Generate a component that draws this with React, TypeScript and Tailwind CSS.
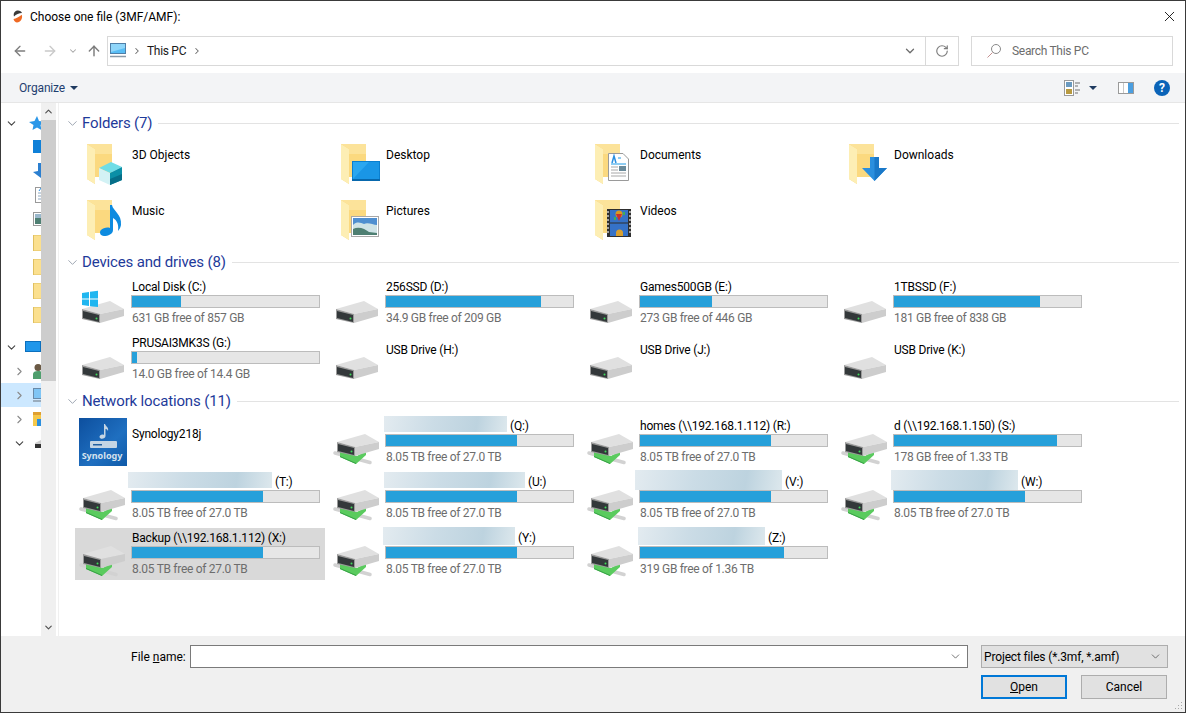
import { ArrowLeft, ArrowRight, ArrowUp, ChevronDown, ChevronRight, ChevronUp, RotateCw, X } from 'lucide-react';

const UI = "font-['Roboto','Noto_Sans',sans-serif]";

function Folder() {
  return (
    <>
      <path d="M12 6 H37 V39 H20 V46 L12 41 Z" fill="#fbd97f" />
      <path d="M12 6 L20 11 V46 L12 41 Z" fill="#fdeeb4" />
      <path d="M20 11 L12 6 H37 V16 H20 Z" fill="#fce39a" />
    </>
  );
}

function Overlay({ kind }: { kind: string }) {
  if (kind === 'cube')
    return (
      <>
        <path d="M24 30 L36 24 L47 29 L35 35 Z" fill="#6fdde6" />
        <path d="M24 30 L35 35 V47 L24 42 Z" fill="#d3f2f5" />
        <path d="M35 35 L47 29 V42 L35 47 Z" fill="#0b8fa6" />
        <path d="M35 41 L47 36 V42 L35 47 Z" fill="#066e88" />
      </>
    );
  if (kind === 'desktop')
    return (
      <>
        <rect x="23" y="23" width="28" height="20" fill="#0a7fd0" />
        <path d="M24 24 H50 V41 H24 Z" fill="#2ba7f0" />
        <path d="M24 41 L40 24 H50 V41 Z" fill="#1a96e6" />
        <rect x="23" y="41" width="28" height="2" fill="#0868ad" />
      </>
    );
  if (kind === 'doc')
    return (
      <>
        <path d="M25.5 15.5 H40 L45.5 21 V42.5 H25.5 Z" fill="#fff" stroke="#9a9a9a" />
        <path d="M29 25 L31 18 L33 25" fill="none" stroke="#2a8fe0" strokeWidth="1.5" />
        <path d="M35 20 H38 M28 26 H43" stroke="#1e9be6" strokeWidth="1" />
        <path d="M28 29 H35 M28 32 H35 M28 35 H43 M28 38 H43" stroke="#a8a8a8" strokeWidth="1" />
        <rect x="36" y="28" width="7" height="5" fill="#6a8a9a" />
      </>
    );
  if (kind === 'download')
    return (
      <>
        <path d="M33 19 H42 V30 H50 L37.5 43 L25 30 H33 Z" fill="#2b8fde" />
        <path d="M37.5 19 H42 V30 H50 L37.5 43 Z" fill="#1a78c8" />
      </>
    );
  if (kind === 'music')
    return <path d="M35 11 L37 11 C38 17 47 20 46 31 C45.5 34 44 36 43 37 C44 31 42 26 38 24 V36 C38 40 33 42 29 42 C25 42 24 38 26 36 C28 34 32 33 35 34 Z" fill="#0d8be0" />;
  if (kind === 'picture')
    return (
      <>
        <rect x="22.5" y="22.5" width="27" height="20" fill="#fff" stroke="#a8a8a8" />
        <rect x="24" y="24" width="24" height="17" fill="#4f8fd0" />
        <path d="M24 31 C28 27 32 29 35 30 C39 28 44 31 48 31 V41 H24 Z" fill="#cfe3e6" />
        <path d="M24 35 C30 32 36 35 40 38 L48 39 V41 H24 Z" fill="#4e7f72" />
      </>
    );
  return (
    <>
      <rect x="24" y="15" width="24" height="28" fill="#2e2e2e" />
      <rect x="27" y="16" width="18" height="12.5" fill="#3572c8" />
      <rect x="27" y="29.5" width="18" height="12.5" fill="#3572c8" />
      <circle cx="36" cy="20" r="3.5" fill="#d89a20" />
      <path d="M33 20 L36 27 L39 20 Z" fill="#c83030" />
      <path d="M31 23 H33 V26 H31 Z M40 18 H42 V21 H40 Z" fill="#3fae5a" />
      <path d="M33 39 A3.5 3.5 0 0 1 40 39 V42 H33 Z" fill="#d8a030" />
      <path d="M24 18 H26 M24 22 H26 M24 26 H26 M24 30 H26 M24 34 H26 M24 38 H26 M46 18 H48 M46 22 H48 M46 26 H48 M46 30 H48 M46 34 H48 M46 38 H48" stroke="#c8c8c8" strokeWidth="1.5" />
    </>
  );
}

function FolderIcon({ kind }: { kind: string }) {
  return (
    <svg width="56" height="52" viewBox="0 0 56 52" className="shrink-0">
      <Folder />
      <Overlay kind={kind} />
    </svg>
  );
}

function DriveShape({ dx, dy }: { dx: number; dy: number }) {
  return (
    <g transform={`translate(${dx} ${dy})`}>
      <path d="M0 8 L28 0 L42 8 L18 13 Z" fill="#e0e0e0" />
      <path d="M18 13 L42 8 V15 L18 22 Z" fill="#cdcdcd" />
      <path d="M0 8 L18 13 V22 L0 18 Z" fill="#9a9a9a" />
      <path d="M1 10 L17 14 V21 L1 17 Z" fill="#33383a" />
      <circle cx="14.5" cy="17.5" r="1" fill="#3ddc5a" />
    </g>
  );
}

function DriveIcon({ kind }: { kind: string }) {
  return (
    <svg width="56" height="52" viewBox="0 0 56 52" className="shrink-0">
      {kind === 'net' ? (
        <>
          <path d="M6 37 L41 46.5" fill="none" stroke="#d2d2d2" strokeWidth="3.5" strokeLinecap="round" />
          <path d="M11 33 L28 40 L37 35 V39 L27 48 L11 41 Z" fill="#5acb5e" />
          <path d="M11 40 L27 47 L27 48 L11 41 Z" fill="#35a045" />
          <DriveShape dx={8} dy={18} />
        </>
      ) : (
        <DriveShape dx={7} dy={24} />
      )}
      {kind === 'win' && (
        <g fill="#1fb6f0">
          <path d="M7 16 L14 15 V21.5 H7 Z" />
          <path d="M15 14.8 L23 13.8 V21.5 H15 Z" />
          <path d="M7 22.5 H14 V29 L7 28 Z" />
          <path d="M15 22.5 H23 V30 L15 29.2 Z" />
        </g>
      )}
    </svg>
  );
}

function SynologyIcon() {
  return (
    <svg width="56" height="52" viewBox="0 0 56 52" className="shrink-0">
      <defs>
        <linearGradient id="syn" x1="0" y1="0" x2="1" y2="1">
          <stop offset="0" stopColor="#0d4f9e" />
          <stop offset="0.6" stopColor="#1f6fc0" />
          <stop offset="1" stopColor="#0f5aa8" />
        </linearGradient>
      </defs>
      <rect x="4" y="2" width="48" height="48" fill="url(#syn)" />
      <path d="M29 8 L30 8 C31 11 34 11 33 15 C32 13 31 13 30.5 13 V20 C30.5 23 25 24 24.5 21 C24.5 19 27 18 29 19 Z" fill="#c5d5e4" />
      <rect x="15" y="25" width="27" height="7" rx="1" fill="#c5d5e4" />
      <rect x="18" y="28" width="9" height="1.5" fill="#24609f" />
      <text x="27" y="43" textAnchor="middle" fontSize="9" fontWeight="700" fill="#d5e2ee" fontFamily="Noto Sans, sans-serif">Synology</text>
    </svg>
  );
}

function Bar({ fill }: { fill: number }) {
  return (
    <div className="h-[13px] w-[189px] border border-[#bcbcbc] bg-[#e6e6e6]">
      <div className="h-full bg-[#26a0da]" style={{ width: fill }} />
    </div>
  );
}

type Drive = {
  name: string;
  icon: string;
  fill?: number;
  free?: string;
  blur?: [number, number, number]; // width, height, left shift of the smudged part of the name
  selected?: boolean;
};

function DriveTile({ d }: { d: Drive }) {
  return (
    <div className={`flex h-[52px] ${d.selected ? 'bg-[#d9d9d9]' : ''}`}>
      <div className="w-[56px] shrink-0">
        {d.icon === 'syn' ? <SynologyIcon /> : <DriveIcon kind={d.icon} />}
      </div>
      <div className={`min-w-0 ${d.fill ? '' : d.icon === 'syn' ? 'pt-[8px]' : 'pt-[7px]'}`}>
        <div className="flex h-[18px] items-center text-xs leading-[18px] tracking-[-0.2px] whitespace-nowrap text-black">
          {d.blur && (
            <div
              className="mr-[2px] mb-[2px] shrink-0 bg-[linear-gradient(100deg,#e3ebf0_0%,#cbdce6_40%,#bdd3df_75%,#dde8ed_100%)]"
              style={{ width: d.blur[0], height: d.blur[1], marginLeft: d.blur[2] }}
            />
          )}
          <span className="pt-[2px] pl-px">{d.name}</span>
        </div>
        {d.fill && <Bar fill={d.fill} />}
        {d.free && <div className="h-[18px] pl-px text-xs leading-[20px] tracking-[-0.3px] whitespace-nowrap text-[#6d6d6d]">{d.free}</div>}
      </div>
    </div>
  );
}

function SectionHead({ title }: { title: string }) {
  return (
    <div className="flex h-5 items-center pt-[2px] pl-[6px]">
      <ChevronDown size={15} strokeWidth={1.2} className="shrink-0 text-[#7f8a99]" />
      <span className="ml-[2px] text-[15px] leading-5 tracking-[-0.15px] whitespace-nowrap text-[#1e3a9a]">{title}</span>
      <div className="ml-[6px] h-px flex-1 bg-[#e3e3e3]" />
    </div>
  );
}

const FOLDERS = [
  ['3D Objects', 'cube'],
  ['Desktop', 'desktop'],
  ['Documents', 'doc'],
  ['Downloads', 'download'],
  ['Music', 'music'],
  ['Pictures', 'picture'],
  ['Videos', 'film'],
];

const DRIVES: Drive[] = [
  { name: 'Local Disk (C:)', icon: 'win', fill: 49, free: '631 GB free of 857 GB' },
  { name: '256SSD (D:)', icon: 'hdd', fill: 155, free: '34.9 GB free of 209 GB' },
  { name: 'Games500GB (E:)', icon: 'hdd', fill: 72, free: '273 GB free of 446 GB' },
  { name: '1TBSSD (F:)', icon: 'hdd', fill: 146, free: '181 GB free of 838 GB' },
  { name: 'PRUSAI3MK3S (G:)', icon: 'hdd', fill: 5, free: '14.0 GB free of 14.4 GB' },
  { name: 'USB Drive (H:)', icon: 'hdd' },
  { name: 'USB Drive (J:)', icon: 'hdd' },
  { name: 'USB Drive (K:)', icon: 'hdd' },
];

const NETWORK: Drive[] = [
  { name: 'Synology218j', icon: 'syn' },
  { name: '(Q:)', icon: 'net', fill: 131, free: '8.05 TB free of 27.0 TB', blur: [123, 16, -1] },
  { name: 'homes (\\\\192.168.1.112) (R:)', icon: 'net', fill: 131, free: '8.05 TB free of 27.0 TB' },
  { name: 'd (\\\\192.168.1.150) (S:)', icon: 'net', fill: 163, free: '178 GB free of 1.33 TB' },
  { name: '(T:)', icon: 'net', fill: 131, free: '8.05 TB free of 27.0 TB', blur: [144, 16, -3] },
  { name: '(U:)', icon: 'net', fill: 131, free: '8.05 TB free of 27.0 TB', blur: [141, 16, -1] },
  { name: '(V:)', icon: 'net', fill: 131, free: '8.05 TB free of 27.0 TB', blur: [147, 20, -4] },
  { name: '(W:)', icon: 'net', fill: 131, free: '8.05 TB free of 27.0 TB', blur: [127, 20, -2] },
  { name: 'Backup (\\\\192.168.1.112) (X:)', icon: 'net', fill: 131, free: '8.05 TB free of 27.0 TB', selected: true },
  { name: '(Y:)', icon: 'net', fill: 131, free: '8.05 TB free of 27.0 TB', blur: [132, 18, -2] },
  { name: '(Z:)', icon: 'net', fill: 144, free: '319 GB free of 1.36 TB', blur: [127, 18, -1] },
];

function NavIcon({ kind }: { kind: string }) {
  if (kind === 'star')
    return (
      <svg width="16" height="16" viewBox="0 0 16 16" className="-ml-[5px] shrink-0">
        <path d="M9 1 L11 6 L16 6.5 L12.5 10 L13.5 15 L9 12.5 L4.5 15 L5.5 10 L1 7 L6.5 6 Z" fill="#2b97e8" />
      </svg>
    );
  if (kind === 'desktop')
    return (
      <svg width="16" height="16" viewBox="0 0 16 16" className="shrink-0">
        <rect y="1" width="16" height="13" fill="#0f80d8" />
      </svg>
    );
  if (kind === 'monitor')
    return (
      <svg width="16" height="14" viewBox="0 0 16 14" className="-ml-[8px] shrink-0">
        <rect x="0.5" y="1.5" width="15" height="10" fill="#1f96ea" stroke="#0b6fbd" />
      </svg>
    );
  if (kind === 'down')
    return (
      <svg width="16" height="16" viewBox="0 0 16 16" className="shrink-0">
        <path d="M5 0 H9 V8 H14 L8 15 L0 9 L5 8 Z" fill="#2b7fd0" />
      </svg>
    );
  if (kind === 'doc')
    return (
      <svg width="16" height="16" viewBox="0 0 16 16" className="shrink-0">
        <rect x="2.5" y="0.5" width="13" height="15" fill="#fff" stroke="#999" />
        <path d="M5 6 H16 M5 9 H16 M5 12 H16" stroke="#8fa8c0" />
        <path d="M6 4 L8 1" stroke="#2a8fe0" />
      </svg>
    );
  if (kind === 'pic')
    return (
      <svg width="16" height="16" viewBox="0 0 16 16" className="shrink-0">
        <rect x="0.5" y="1.5" width="15" height="13" fill="#fff" stroke="#999" />
        <rect x="2" y="3" width="14" height="10" fill="#4e7f72" />
        <rect x="2" y="3" width="14" height="4" fill="#9ab8cc" />
      </svg>
    );
  if (kind === 'folder')
    return (
      <svg width="16" height="16" viewBox="0 0 16 16" className="shrink-0">
        <rect x="0.5" y="0" width="15" height="16" fill="#fbe08f" stroke="#e0c060" />
      </svg>
    );
  if (kind === 'user')
    return (
      <svg width="16" height="16" viewBox="0 0 16 16" className="-ml-[2px] shrink-0">
        <circle cx="7" cy="4.5" r="3.5" fill="#6b5a45" />
        <path d="M2 16 V11 C2 9 4 8 7 8 C10 8 12 9 12 11 V16 Z" fill="#4f9e6d" />
      </svg>
    );
  if (kind === 'pc')
    return (
      <svg width="16" height="16" viewBox="0 0 16 16" className="shrink-0">
        <rect x="0.5" y="1.5" width="15" height="10" fill="#7fc5f5" stroke="#6a8aa8" />
        <path d="M0 14 H16" stroke="#8a9aa8" strokeWidth="1.5" />
      </svg>
    );
  if (kind === 'lib')
    return (
      <svg width="16" height="16" viewBox="0 0 16 16" className="shrink-0">
        <rect y="1" width="16" height="14" fill="#f5c84a" />
        <rect y="1" width="16" height="3" fill="#e0a030" />
        <rect x="4" y="8" width="12" height="7" fill="#2b8fde" />
      </svg>
    );
  return (
    <svg width="16" height="16" viewBox="0 0 16 16" className="shrink-0">
      <path d="M2 8 L8 5 L16 5 V9 H2 Z" fill="#d0d0d0" />
      <rect x="2" y="9" width="14" height="4" fill="#333" />
    </svg>
  );
}

type NavRow = { icon: string; chev?: 'open' | 'closed'; indent?: boolean; selected?: boolean };

const NAV_TOP: NavRow[] = [
  { icon: 'star', chev: 'open' },
  { icon: 'desktop' },
  { icon: 'down' },
  { icon: 'doc' },
  { icon: 'pic' },
  { icon: 'folder' },
  { icon: 'folder' },
  { icon: 'folder' },
  { icon: 'folder' },
];

const NAV_BOTTOM: NavRow[] = [
  { icon: 'monitor', chev: 'open' },
  { icon: 'user', chev: 'closed', indent: true },
  { icon: 'pc', chev: 'closed', indent: true, selected: true },
  { icon: 'lib', chev: 'closed', indent: true },
  { icon: 'drive', chev: 'open', indent: true },
];

function NavItem({ r }: { r: NavRow }) {
  return (
    <div className={`flex h-6 items-center overflow-hidden ${r.selected ? 'bg-[#cce8ff]' : ''}`}>
      <div className={`flex w-[32px] shrink-0 ${r.indent ? 'pl-[12px]' : 'pl-[4px]'}`}>
        {r.chev === 'open' && <ChevronDown size={13} strokeWidth={2} className="text-[#444]" />}
        {r.chev === 'closed' && <ChevronRight size={13} strokeWidth={2} className="text-[#8a8a8a]" />}
      </div>
      <NavIcon kind={r.icon} />
    </div>
  );
}

export default function App() {
  return (
    <div className={`${UI} flex h-[713px] w-[1186px] flex-col overflow-hidden border-t border-r border-b border-l border-[#3a3a3a] bg-white text-xs`}>
      {/* title bar */}
      <div className="flex h-[31px] shrink-0 items-center">
        <svg width="11" height="13" viewBox="0 0 11 13" className="ml-[11px]">
          <path d="M2 6.5 C1 3 3 0.5 6 0.5 C8 0.5 9.5 1.5 10 3 C7 3 4 4.5 2 6.5 Z" fill="#3a3a3a" />
          <path d="M1.5 9 C4 8.5 7 7 9.8 4.8 C11 8.5 8.5 12.5 5 12.5 C3.5 12.5 2 11 1.5 9 Z" fill="#ef6a24" />
        </svg>
        <span className="ml-[7px] text-xs text-black">Choose one file (3MF/AMF):</span>
        <X size={17} strokeWidth={1.2} className="mr-[7px] ml-auto text-black" />
      </div>

      {/* address row */}
      <div className="flex h-[41px] shrink-0 items-start pt-[4px]">
        <div className="flex h-[30px] w-[106px] shrink-0 items-center">
          <ArrowLeft size={16} strokeWidth={2} className="ml-[11px] text-[#7d7d7d]" />
          <ArrowRight size={16} strokeWidth={2} className="ml-[14px] text-[#c9c9c9]" />
          <ChevronDown size={10} strokeWidth={2.5} className="ml-[10px] text-[#a5a5a5]" />
          <ArrowUp size={16} strokeWidth={2.2} className="ml-[8px] text-[#7d7d7d]" />
        </div>
        <div className="flex h-[30px] w-[852px] shrink-0 items-center border border-[#d9d9d9]">
          <svg width="17" height="16" viewBox="0 0 17 16" className="ml-[2px] shrink-0">
            <rect x="0.5" y="0.5" width="15" height="10" fill="#58bdf5" stroke="#4f7fa8" />
            <path d="M1 1 H15 V5 L1 9 Z" fill="#8fd6fa" />
            <path d="M0 13.5 H16" stroke="#8a9aa8" strokeWidth="1.5" />
          </svg>
          <ChevronRight size={10} strokeWidth={2.5} className="ml-[5px] text-[#6a6a6a]" />
          <span className="ml-[5px] text-xs tracking-[-0.3px] text-[#1a1a1a]">This PC</span>
          <ChevronRight size={10} strokeWidth={2.5} className="ml-[6px] text-[#6a6a6a]" />
          <ChevronDown size={14} strokeWidth={2.2} className="mr-[8px] ml-auto text-[#6d6d6d]" />
          <div className="flex h-full w-[33px] shrink-0 items-center justify-center border-l border-[#d9d9d9]">
            <RotateCw size={14} strokeWidth={2} className="text-[#7d7d7d]" />
          </div>
        </div>
        <div className="ml-[12px] flex h-[30px] w-[202px] shrink-0 items-center border border-[#d9d9d9]">
          <svg width="16" height="16" viewBox="0 0 16 16" className="ml-[14px] shrink-0">
            <circle cx="10" cy="6" r="4.5" fill="none" stroke="#8a8a8a" />
            <path d="M6.5 9.5 L1.5 14.5" stroke="#c49090" />
          </svg>
          <span className="ml-[10px] text-xs tracking-[-0.3px] text-[#6d6d6d]">Search This PC</span>
        </div>
      </div>

      {/* toolbar */}
      <div className="flex h-[30px] shrink-0 items-center border-b border-[#e6e6e6] bg-[#f3f4f6]">
        <span className="ml-[18px] text-xs tracking-[-0.15px] text-[#1f3f70]">Organize</span>
        <svg width="8" height="4" viewBox="0 0 8 4" className="ml-[5px]"><path d="M0 0 H8 L4 4 Z" fill="#1f3a60" /></svg>
        <svg width="16" height="16" viewBox="0 0 16 16" className="ml-auto">
          <rect x="0.5" y="0.5" width="9" height="15" fill="#fff" stroke="#9a9a9a" />
          <rect x="2" y="2" width="6" height="5" fill="#6a9ac0" />
          <rect x="2" y="9" width="6" height="5" fill="#b89a40" />
          <path d="M11 3 H16 M11 6 H14 M11 10 H16 M11 13 H14" stroke="#707070" />
        </svg>
        <svg width="8" height="4" viewBox="0 0 8 4" className="ml-[9px]"><path d="M0 0 H8 L4 4 Z" fill="#1f3a60" /></svg>
        <svg width="16" height="12" viewBox="0 0 16 12" className="ml-[21px]">
          <rect x="0.5" y="0.5" width="15" height="11" fill="#fff" stroke="#9a9a9a" />
          <rect x="10" y="1" width="5" height="10" fill="#4a9ee0" />
          <path d="M5.5 1 V11" stroke="#c8c8c8" />
        </svg>
        <div className="mr-[15px] ml-[20px] flex h-4 w-4 items-center justify-center rounded-full bg-[#0a63b8] text-[12px] leading-none font-bold text-white">?</div>
      </div>

      {/* body */}
      <div className="flex min-h-0 flex-1">
        <div className="w-[40px] shrink-0 overflow-hidden pt-[8px]">
          {NAV_TOP.map((r, i) => (
            <NavItem key={i} r={r} />
          ))}
          <div className="h-2" />
          {NAV_BOTTOM.map((r, i) => (
            <NavItem key={i} r={r} />
          ))}
        </div>
        <div className="flex w-[15px] shrink-0 flex-col bg-[#f0f0f0]">
          <div className="flex h-[17px] items-center justify-center">
            <ChevronUp size={11} strokeWidth={2.5} className="text-[#505050]" />
          </div>
          <div className="h-[261px] bg-[#cdcdcd]" />
          <div className="flex-1" />
          <div className="flex h-[17px] items-center justify-center">
            <ChevronDown size={11} strokeWidth={2.5} className="text-[#505050]" />
          </div>
        </div>
        <div className="w-[3px] shrink-0 border-l-2 border-[#ffffff] bg-[#f0f0f0]" />
        <div className="min-w-0 flex-1 pt-[9px] pr-[6px]">
          <SectionHead title="Folders (7)" />
          <div className="mt-[6px] grid grid-cols-[repeat(4,250px)] gap-1 pl-[16px]">
            {FOLDERS.map(([name, kind]) => (
              <div key={name} className="flex h-[52px]">
                <FolderIcon kind={kind} />
                <div className="pt-[8px] pl-px text-xs leading-[18px] text-black">{name}</div>
              </div>
            ))}
          </div>
          <div className="mt-[5px]">
            <SectionHead title="Devices and drives (8)" />
          </div>
          <div className="mt-[6px] grid grid-cols-[repeat(4,250px)] gap-1 pl-[16px]">
            {DRIVES.map((d) => (
              <DriveTile key={d.name} d={d} />
            ))}
          </div>
          <div className="mt-[5px]">
            <SectionHead title="Network locations (11)" />
          </div>
          <div className="mt-[6px] grid grid-cols-[repeat(4,250px)] gap-1 pl-[16px]">
            {NETWORK.map((d) => (
              <DriveTile key={d.name} d={d} />
            ))}
          </div>
        </div>
      </div>

      {/* footer */}
      <div className="relative h-[76px] shrink-0 bg-[#f0f0f0]">
        <div className="flex items-center pt-[9px]">
          <span className="ml-[130px] w-[59px] shrink-0 text-xs text-black">
            File <span className="underline">n</span>ame:
          </span>
          <div className="flex h-[23px] w-[778px] shrink-0 items-center justify-end border border-[#7a7a7a] bg-white pr-[5px]">
            <ChevronDown size={13} strokeWidth={1.5} className="text-[#555]" />
          </div>
          <div className="ml-[13px] flex h-[23px] w-[187px] shrink-0 items-center justify-between border border-[#adadad] bg-[#e1e1e1] pr-[5px] pl-[2px] text-xs tracking-[-0.15px] text-black">
            <span>Project files (*.3mf, *.amf)</span>
            <ChevronDown size={13} strokeWidth={1.5} className="text-[#555]" />
          </div>
        </div>
        <div className="mt-[7px] flex justify-end gap-[14px] pr-[18px]">
          <div className="flex h-[24px] w-[86px] items-center justify-center border-2 border-[#0078d7] bg-[#e1e1e1] text-xs text-black">
            <span><span className="underline">O</span>pen</span>
          </div>
          <div className="flex h-[24px] w-[86px] items-center justify-center border border-[#adadad] bg-[#e1e1e1] text-xs text-black">
            Cancel
          </div>
        </div>
        <svg width="10" height="10" viewBox="0 0 10 10" className="absolute right-[2px] bottom-[1px]">
          <path d="M8 1 H9 V2 H8 Z M5 4 H6 V5 H5 Z M8 4 H9 V5 H8 Z M2 7 H3 V8 H2 Z M5 7 H6 V8 H5 Z M8 7 H9 V8 H8 Z" fill="#a8a8a8" />
        </svg>
      </div>
    </div>
  );
}
